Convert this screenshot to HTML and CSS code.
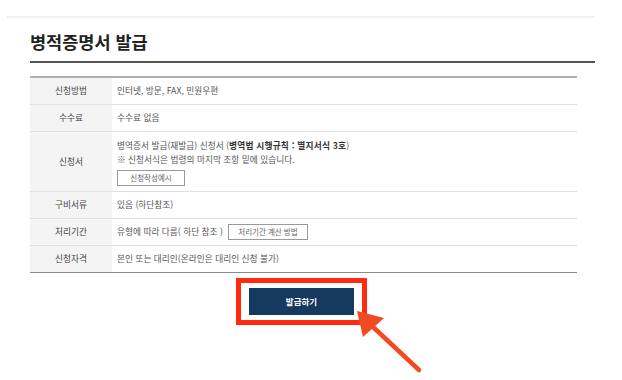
FILE: index.html
```html
<!DOCTYPE html>
<html lang="ko">
<head>
<meta charset="utf-8">
<link rel="stylesheet" href="styles.css">
</head>
<body>
<div class="frame">
  <h1 class="title">병적증명서 발급</h1>
  <table class="info">
    <tr>
      <th>신청방법</th>
      <td>인터넷, 방문, FAX, 민원우편</td>
    </tr>
    <tr>
      <th>수수료</th>
      <td>수수료 없음</td>
    </tr>
    <tr class="tall">
      <th>신청서</th>
      <td>
        <div class="line">병역증서 발급(재발급) 신청서 (<b>병역법 시행규칙 : 별지서식 3호</b>)</div>
        <div class="line">※ 신청서식은 법령의 마지막 조항 밑에 있습니다.</div>
        <span class="small-btn btn-form">신청작성예시</span>
      </td>
    </tr>
    <tr>
      <th>구비서류</th>
      <td>있음 (하단참조)</td>
    </tr>
    <tr>
      <th>처리기간</th>
      <td><span class="inline-text">유형에 따라 다름( 하단 참조 )</span><span class="small-btn btn-calc">처리기간 계산 방법</span></td>
    </tr>
    <tr class="last">
      <th>신청자격</th>
      <td>본인 또는 대리인(온라인은 대리인 신청 불가)</td>
    </tr>
  </table>
  <div class="actions">
    <div class="highlight">
      <span class="issue-btn">발급하기</span>
    </div>
  </div>
</div>
<svg class="arrow" width="622" height="380" viewBox="0 0 622 380">
  <line x1="419" y1="370" x2="372" y2="326" stroke="#f24a22" stroke-width="4.5" stroke-linecap="round"/>
  <polygon points="357,311 384,318 363,337" fill="#f24a22"/>
</svg>
</body>
</html>
```

FILE: styles.css
```css
html, body {
  margin: 0;
  padding: 0;
  background: #ffffff;
}

body {
  font-family: "Noto Sans CJK KR", "Noto Sans", sans-serif;
  color: #555;
  position: relative;
  width: 622px;
  height: 380px;
  overflow: hidden;
}

.frame {
  margin: 16px 27px 0 7px;
  border-top: 2px solid #f0f0f0;
  padding-left: 23px;
}

.title {
  margin: 0;
  padding: 12px 0 7px 0;
  font-size: 17.5px;
  line-height: 24px;
  font-weight: 700;
  color: #222;
  letter-spacing: 0;
  border-bottom: 2px solid #555;
}

.info {
  margin-top: 13px;
  width: 547px;
  border-collapse: collapse;
  border-top: 2px solid #adadad;
  font-size: 8.7px;
  line-height: 10px;
}

.info th,
.info td {
  height: 26px;
  padding: 0 5px;
  border-bottom: 1px solid #e0e0e0;
  vertical-align: middle;
}

.info th {
  width: 72px;
  background: #f4f4f4;
  font-weight: 400;
  color: #444;
  text-align: center;
}

.info td {
  text-align: left;
  color: #555;
}

.info tr.tall th,
.info tr.tall td {
  height: 58px;
}

.info tr.tall td {
  padding-top: 1px;
}

.line {
  line-height: 14px;
}

.info tr.last th,
.info tr.last td {
  border-bottom: 1px solid #8a8a8a;
}

.info b {
  font-weight: 700;
  color: #333;
  letter-spacing: 0.2px;
}

.small-btn {
  display: inline-block;
  box-sizing: border-box;
  height: 16px;
  line-height: 14px;
  border: 1px solid #9a9a9a;
  color: #666;
  font-size: 7.5px;
  text-align: center;
  vertical-align: middle;
}

.btn-form {
  width: 68px;
  margin-top: 3px;
}

.btn-calc {
  width: 80px;
  margin-left: 5px;
}

.inline-text {
  vertical-align: middle;
}

.actions {
  width: 547px;
  display: flex;
  justify-content: center;
  margin-top: 5px;
}

.highlight {
  border: 5px solid #ff2b10;
  padding: 5px 8px;
  margin-left: -4px;
}

.issue-btn {
  display: block;
  width: 105px;
  height: 27px;
  line-height: 27px;
  background: #15395f;
  color: #fff;
  font-size: 8.5px;
  font-weight: 700;
  text-align: center;
}

.arrow {
  position: absolute;
  left: 0;
  top: 0;
  pointer-events: none;
}
```
